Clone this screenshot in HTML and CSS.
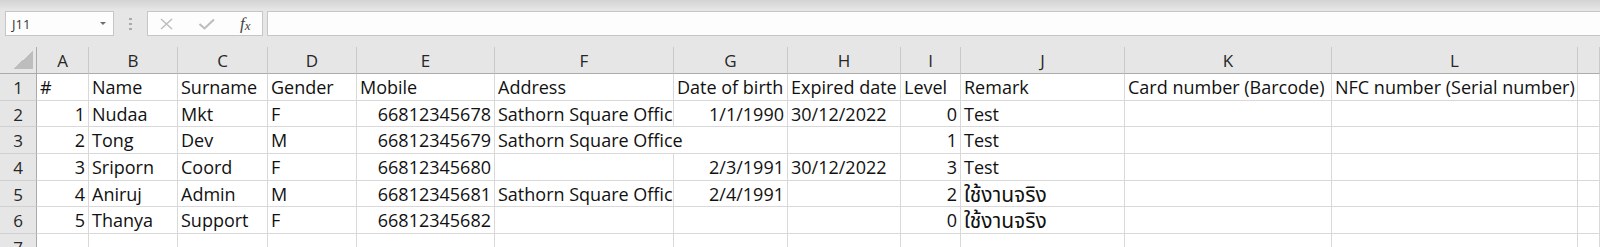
FILE: index.html
```html
<!DOCTYPE html>
<html lang="en">
<head>
  <meta charset="UTF-8">
  <meta name="viewport" content="width=device-width, initial-scale=1.0">
  <title>Members.xlsx</title>
  <link rel="stylesheet" href="styles.css">
</head>
<body>
  <div class="toolbar">
    <div class="namebox">
      <span>J11</span>
      <i class="caret"></i>
    </div>
    <div class="grip"><i></i><i></i><i></i></div>
    <div class="fxbox">
      <svg class="btn" width="16" height="12" viewBox="0 0 16 12"><path d="M2 1 L13 11 M13 1 L2 11" stroke="#bcbcbc" stroke-width="1.4" fill="none"/></svg>
      <svg class="btn" width="18" height="12" viewBox="0 0 18 12"><path d="M1.5 6 L6.5 10.5 L16 1.5" stroke="#bcbcbc" stroke-width="2" fill="none"/></svg>
      <span class="fx">f<sub>x</sub></span>
    </div>
    <div class="formula"></div>
  </div>

  <div class="sheet">
    <div class="corner"><i></i></div>
    <div class="col">A</div>
    <div class="col">B</div>
    <div class="col">C</div>
    <div class="col">D</div>
    <div class="col">E</div>
    <div class="col">F</div>
    <div class="col">G</div>
    <div class="col">H</div>
    <div class="col">I</div>
    <div class="col">J</div>
    <div class="col">K</div>
    <div class="col">L</div>
    <div class="col"></div>

    <div class="row">1</div>
    <div class="cell">#</div>
    <div class="cell">Name</div>
    <div class="cell">Surname</div>
    <div class="cell">Gender</div>
    <div class="cell">Mobile</div>
    <div class="cell">Address</div>
    <div class="cell">Date of birth</div>
    <div class="cell">Expired date</div>
    <div class="cell">Level</div>
    <div class="cell">Remark</div>
    <div class="cell">Card number (Barcode)</div>
    <div class="cell">NFC number (Serial number)</div>
    <div class="cell"></div>

    <div class="row">2</div>
    <div class="cell num">1</div>
    <div class="cell">Nudaa</div>
    <div class="cell">Mkt</div>
    <div class="cell">F</div>
    <div class="cell num">66812345678</div>
    <div class="cell">Sathorn Square Office</div>
    <div class="cell num">1/1/1990</div>
    <div class="cell">30/12/2022</div>
    <div class="cell num">0</div>
    <div class="cell">Test</div>
    <div class="cell"></div>
    <div class="cell"></div>
    <div class="cell"></div>

    <div class="row">3</div>
    <div class="cell num">2</div>
    <div class="cell">Tong</div>
    <div class="cell">Dev</div>
    <div class="cell">M</div>
    <div class="cell num">66812345679</div>
    <div class="cell spill">Sathorn Square Office</div>
    <div class="cell"></div>
    <div class="cell num">1</div>
    <div class="cell">Test</div>
    <div class="cell"></div>
    <div class="cell"></div>
    <div class="cell"></div>

    <div class="row">4</div>
    <div class="cell num">3</div>
    <div class="cell">Sriporn</div>
    <div class="cell">Coord</div>
    <div class="cell">F</div>
    <div class="cell num">66812345680</div>
    <div class="cell"></div>
    <div class="cell num">2/3/1991</div>
    <div class="cell">30/12/2022</div>
    <div class="cell num">3</div>
    <div class="cell">Test</div>
    <div class="cell"></div>
    <div class="cell"></div>
    <div class="cell"></div>

    <div class="row">5</div>
    <div class="cell num">4</div>
    <div class="cell">Aniruj</div>
    <div class="cell">Admin</div>
    <div class="cell">M</div>
    <div class="cell num">66812345681</div>
    <div class="cell">Sathorn Square Office</div>
    <div class="cell num">2/4/1991</div>
    <div class="cell"></div>
    <div class="cell num">2</div>
    <div class="cell th">ใช้งานจริง</div>
    <div class="cell"></div>
    <div class="cell"></div>
    <div class="cell"></div>

    <div class="row">6</div>
    <div class="cell num">5</div>
    <div class="cell">Thanya</div>
    <div class="cell">Support</div>
    <div class="cell">F</div>
    <div class="cell num">66812345682</div>
    <div class="cell"></div>
    <div class="cell"></div>
    <div class="cell"></div>
    <div class="cell num">0</div>
    <div class="cell th">ใช้งานจริง</div>
    <div class="cell"></div>
    <div class="cell"></div>
    <div class="cell"></div>

    <div class="row">7</div>
    <div class="cell"></div>
    <div class="cell"></div>
    <div class="cell"></div>
    <div class="cell"></div>
    <div class="cell"></div>
    <div class="cell"></div>
    <div class="cell"></div>
    <div class="cell"></div>
    <div class="cell"></div>
    <div class="cell"></div>
    <div class="cell"></div>
    <div class="cell"></div>
    <div class="cell"></div>
  </div>
</body>
</html>
```

FILE: styles.css
```css
html, body {
  margin: 0;
  height: 247px;
  overflow: hidden;
  background: #e6e6e6;
  font-family: "Open Sans", "Noto Sans Thai", "Loma", "Garuda", "Norasi", "Noto Sans", sans-serif;
  color: #1a1a1a;
}

/* formula bar strip */
.toolbar {
  display: flex;
  align-items: flex-start;
  height: 47px;
  box-sizing: border-box;
  padding-top: 11px;
  background: linear-gradient(#d3d3d3, #e6e6e6 10px);
}

.namebox {
  display: flex;
  align-items: center;
  justify-content: space-between;
  box-sizing: border-box;
  width: 109px;
  height: 25px;
  margin-left: 5px;
  padding: 0 7px 0 6px;
  background: #fdfdfd;
  border: 1px solid #c6c6c6;
  font-size: 13px;
  color: #333;
}

.caret {
  width: 0;
  height: 0;
  border-left: 3px solid transparent;
  border-right: 3px solid transparent;
  border-top: 3px solid #6f6f6f;
}

.grip {
  display: flex;
  flex-direction: column;
  gap: 3px;
  margin: 7px 0 0 15px;
}

.grip i {
  display: block;
  width: 3px;
  height: 2px;
  background: #ababab;
}

.fxbox {
  display: flex;
  align-items: center;
  box-sizing: border-box;
  width: 116px;
  height: 25px;
  margin-left: 15px;
  padding-left: 11px;
  gap: 23px;
  background: #fdfdfd;
  border: 1px solid #c6c6c6;
}

.btn {
  display: block;
}

.fx {
  font-family: "Liberation Serif", serif;
  font-style: italic;
  font-size: 17px;
  color: #444;
  line-height: 1;
  margin-left: 1px;
}

.fx sub {
  font-size: 13px;
  vertical-align: baseline;
  position: relative;
  top: 1px;
}

.formula {
  flex: 1;
  height: 25px;
  box-sizing: border-box;
  margin-left: 4px;
  background: #fdfdfd;
  border: 1px solid #c6c6c6;
  border-right: 0;
}

/* grid */
.sheet {
  display: grid;
  grid-template-columns: 37px 52px 89px 90px 89px 138px 179px 114px 113px 60px 164px 207px 246px 1fr;
  grid-template-rows: 27px;
  grid-auto-rows: 26.67px;
  background: #fff;
}

.corner {
  display: flex;
  justify-content: flex-end;
  align-items: flex-end;
  padding: 0 3px 4px 0;
  background: #e6e6e6;
  border-right: 1px solid #ababab;
  border-bottom: 1px solid #ababab;
}

.corner i {
  display: block;
  width: 20px;
  height: 18px;
  background: linear-gradient(to bottom right, transparent 50%, #bdbdbd 50%);
}

.col {
  box-sizing: border-box;
  background: #e6e6e6;
  border-right: 1px solid #c9c9c9;
  border-bottom: 1px solid #ababab;
  text-align: center;
  font-size: 17px;
  line-height: 27px;
  color: #262626;
}

.row {
  box-sizing: border-box;
  background: #e6e6e6;
  border-right: 1px solid #ababab;
  border-bottom: 1px solid #d0d0d0;
  text-align: center;
  font-size: 17px;
  line-height: 28px;
  color: #262626;
}

.cell {
  box-sizing: border-box;
  min-width: 0;
  overflow: hidden;
  white-space: nowrap;
  padding: 0 3px;
  border-right: 1px solid #d9d9d9;
  border-bottom: 1px solid #d9d9d9;
  font-size: 18px;
  line-height: 26px;
  color: #111;
}

.num {
  text-align: right;
}

.spill {
  grid-column: span 2;
}

.th {
  font-size: 21px;
  line-height: 27px;
}
```
